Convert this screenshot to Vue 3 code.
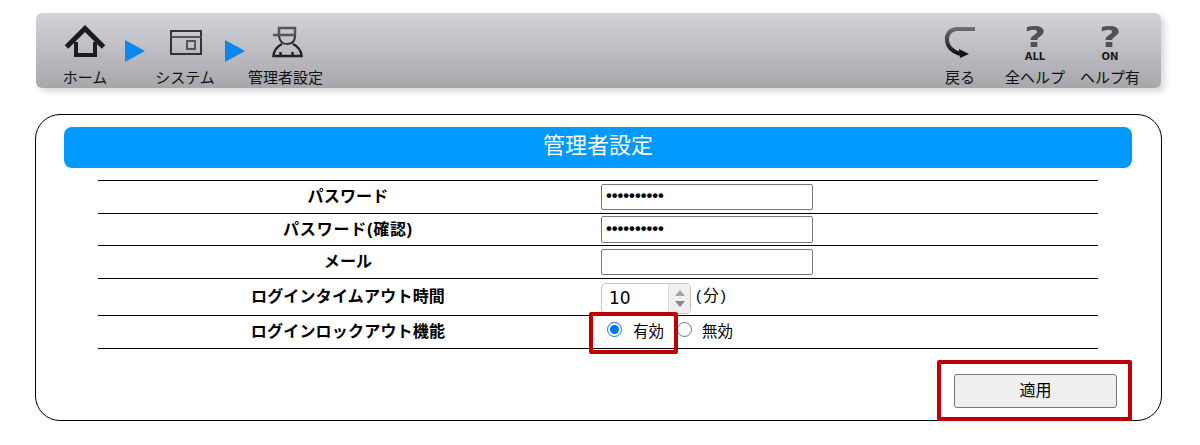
<template>
  <div class="page">
    <header class="toolbar">
      <nav class="crumbs">
        <a class="tool tool-home">
          <svg class="icon" width="46" height="40" viewBox="0 0 46 40">
            <path d="M4.500 27 L23 8.500 L41.500 27" fill="none" stroke="#1c1c1c" stroke-width="5" />
            <path d="M14 22 V35 H33 V22" fill="none" stroke="#1c1c1c" stroke-width="4" />
          </svg>
          <span>ホーム</span>
        </a>
        <i class="arrow"></i>
        <a class="tool tool-system">
          <svg class="icon" width="46" height="40" viewBox="0 0 46 40">
            <rect x="9" y="11" width="30" height="23" fill="none" stroke="#333" stroke-width="2" />
            <path d="M9 17 H39" stroke="#555" stroke-width="2" />
            <rect x="25" y="21" width="8" height="8" fill="none" stroke="#555" stroke-width="2" />
          </svg>
          <span>システム</span>
        </a>
        <i class="arrow"></i>
        <a class="tool tool-admin">
          <svg class="icon" width="46" height="40" viewBox="0 0 46 40">
            <path d="M16 15 V8 H32 V15 M10 15 H33" fill="none" stroke="#555" stroke-width="2.5" />
            <path d="M16 16 Q17 24 24 24 Q32 24 32 16" fill="none" stroke="#333" stroke-width="2" />
            <path d="M19 24 Q11 28 10.500 36 H38.500 Q38 28 30 24" fill="none" stroke="#222" stroke-width="2.5" />
            <path d="M17.500 32 V36 M29.500 32 V36" stroke="#222" stroke-width="2.5" />
          </svg>
          <span>管理者設定</span>
        </a>
      </nav>
      <nav class="actions">
        <a class="tool act-back">
          <svg class="icon" width="46" height="40" viewBox="0 0 46 40">
            <defs>
              <linearGradient id="backFade" gradientUnits="userSpaceOnUse" x1="0" y1="6" x2="0" y2="34">
                <stop offset="0" stop-color="#777" />
                <stop offset="1" stop-color="#111" />
              </linearGradient>
            </defs>
            <path d="M38 9 H19 Q9 11 10 21 Q11 30 23 34" fill="none" stroke="url(#backFade)" stroke-width="4" />
            <path d="M22 29 L32 34 L23 38 Z" fill="#111" />
          </svg>
          <span>戻る</span>
        </a>
        <a class="tool act-all">
          <div class="help">
            <b class="mark">?</b>
            <b class="sub">ALL</b>
          </div>
          <span>全ヘルプ</span>
        </a>
        <a class="tool act-on">
          <div class="help">
            <b class="mark">?</b>
            <b class="sub">ON</b>
          </div>
          <span>ヘルプ有</span>
        </a>
      </nav>
    </header>

    <section class="card">
      <h1 class="title">管理者設定</h1>
      <table class="form">
        <tbody>
          <tr class="r33">
            <th>パスワード</th>
            <td><input class="text pass" type="password" value="1234567890" /></td>
          </tr>
          <tr class="r32">
            <th>パスワード(確認)</th>
            <td><input class="text pass" type="password" value="1234567890" /></td>
          </tr>
          <tr class="r33">
            <th>メール</th>
            <td><input class="text" type="text" /></td>
          </tr>
          <tr class="r37">
            <th>ログインタイムアウト時間</th>
            <td>
              <div class="spin">
                <span class="spin-value">10</span>
                <span class="spin-btns">
                  <i class="up"></i>
                  <i class="down"></i>
                </span>
              </div>
              <span class="unit">(分)</span>
            </td>
          </tr>
          <tr class="r33">
            <th>ログインロックアウト機能</th>
            <td class="radios">
              <label class="radio first"><input type="radio" name="lock" checked /><span>有効</span></label>
              <label class="radio"><input type="radio" name="lock" /><span>無効</span></label>
            </td>
          </tr>
        </tbody>
      </table>
      <div class="foot">
        <button class="apply">適用</button>
      </div>
      <div class="mark-box box-radio"></div>
      <div class="mark-box box-apply"></div>
    </section>
  </div>
</template>

<script setup>
</script>

<style>
html,
body {
  margin: 0;
  background: #fff;
}
</style>

<style scoped>
.page {
  width: 1200px;
  height: 445px;
  overflow: hidden;
  padding-top: 13px;
  box-sizing: border-box;
  font-family: "Liberation Sans", "Noto Sans CJK JP", sans-serif;
  color: #000;
}
.toolbar {
  width: 1125px;
  height: 75px;
  margin-left: 36px;
  display: flex;
  justify-content: space-between;
  border-radius: 6px;
  background: linear-gradient(#d3d3d9, #a6a6ab);
  box-shadow: 4px 4px 6px rgba(0, 0, 0, 0.15);
}
.crumbs,
.actions {
  display: flex;
  position: relative;
}
.tool {
  display: flex;
  flex-direction: column;
  align-items: center;
  font-size: 15px;
  line-height: 18px;
  color: #111;
  white-space: nowrap;
}
.icon {
  display: block;
  height: 40px;
  margin-top: 7px;
  margin-bottom: 9px;
  filter: blur(0.4px);
}
.tool-home {
  width: 46px;
  margin-left: 26px;
}
.tool-system {
  width: 60px;
}
.tool-admin {
  width: 75px;
}
.arrow {
  width: 0;
  height: 0;
  margin: 27px 0 0 0;
  border-left: 20px solid #0d86ee;
  border-top: 11px solid transparent;
  border-bottom: 11px solid transparent;
}
.crumbs .arrow:nth-child(2) {
  margin-left: 17px;
  margin-right: 10px;
}
.crumbs .arrow:nth-child(4) {
  margin-left: 10px;
  margin-right: 3px;
}
.act-back {
  width: 46px;
  margin-right: 22px;
}
.act-all {
  width: 60px;
  margin-right: 15px;
}
.act-on {
  width: 60px;
  margin-right: 21px;
}
.help {
  height: 56px;
  display: flex;
  flex-direction: column;
  align-items: center;
  font-family: "DejaVu Sans", sans-serif;
}
.mark {
  font-size: 28px;
  line-height: 28px;
  margin-top: 11px;
  color: #525254;
  transform: scaleX(1.35);
  filter: blur(0.4px);
}
.sub {
  font-size: 10px;
  line-height: 10px;
  color: #1c1c1c;
}
.card {
  position: relative;
  box-sizing: border-box;
  width: 1127px;
  height: 307px;
  margin: 26px 0 0 35px;
  padding: 12px 29px 0 28px;
  border: 1px solid #000;
  border-radius: 25px;
}
.title {
  margin: 0;
  height: 41px;
  border-radius: 8px;
  background: #0099ff;
  color: #fff;
  font-size: 22px;
  font-weight: 400;
  line-height: 38px;
  text-align: center;
}
.form {
  width: 1000px;
  margin: 12px 0 0 34px;
  border-collapse: collapse;
  table-layout: fixed;
  border-top: 1px solid #000;
}
.form tr {
  border-bottom: 1px solid #000;
}
.r33 {
  height: 33px;
}
.r32 {
  height: 32px;
}
.r37 {
  height: 37px;
}
.form th {
  width: 500px;
  padding: 0;
  font-size: 16px;
  line-height: 20px;
  letter-spacing: 0.2px;
  font-weight: 700;
  text-align: center;
}
.form .r32 th {
  letter-spacing: 0.8px;
}
.form td {
  padding: 0 0 0 3px;
  font-size: 15.5px;
  vertical-align: middle;
}
.text {
  display: block;
  box-sizing: border-box;
  width: 212px;
  height: 26px;
  padding: 1px 4px;
  border: 1px solid #767676;
  border-radius: 2px;
  background: #fff;
  font-size: 13px;
  font-family: "Liberation Sans", sans-serif;
}
.pass {
  padding-bottom: 4px;
  font-size: 16.5px;
  font-weight: 700;
}
.r32 .text {
  height: 27px;
}
.form td:has(.spin) {
  display: flex;
  align-items: center;
  height: 36px;
  box-sizing: border-box;
}
.spin {
  box-sizing: border-box;
  width: 90px;
  height: 31px;
  margin-top: 2px;
  display: flex;
  justify-content: space-between;
  border: 1px solid #c4c4c4;
  border-radius: 5px;
  font-family: "DejaVu Sans", sans-serif;
  font-size: 17px;
  line-height: 29px;
  padding-left: 7px;
  overflow: hidden;
}
.spin-btns {
  width: 21px;
  background: #efefef;
  border-left: 1px solid #dcdcdc;
  display: flex;
  flex-direction: column;
  justify-content: center;
  align-items: center;
  gap: 5px;
}
.up,
.down {
  width: 0;
  height: 0;
  border-left: 5px solid transparent;
  border-right: 5px solid transparent;
}
.up {
  border-bottom: 6px solid #a3a3a3;
}
.down {
  border-top: 6px solid #8a8a8a;
}
.unit {
  margin-left: 5px;
  position: relative;
  top: -3px;
  letter-spacing: 2px;
}
.radios {
  padding-bottom: 4px !important;
}
.radio {
  display: inline-flex;
  align-items: center;
}
.radio input {
  width: 15px;
  height: 15px;
  margin: 0;
  accent-color: #0075ff;
}
.radio span {
  margin-left: 10px;
}
.radio.first {
  margin-left: 6px;
  margin-right: 13px;
}
.radio.first span {
  margin-left: 11px;
}
.foot {
  display: flex;
  justify-content: flex-end;
  margin-top: 25px;
  margin-right: 15px;
}
.apply {
  width: 163px;
  height: 34px;
  border: 1px solid #767676;
  border-radius: 3px;
  background: #efefef;
  padding: 0 0 4px;
  font-size: 16px;
  font-family: "Liberation Sans", "Noto Sans CJK JP", sans-serif;
  color: #000;
}
.mark-box {
  position: absolute;
  box-sizing: border-box;
  border-style: solid;
  border-color: #c00000;
  border-radius: 2px;
}
.box-radio {
  left: 553px;
  top: 197px;
  width: 89px;
  height: 42px;
  border-width: 4px;
}
.box-apply {
  left: 901px;
  top: 245px;
  width: 195px;
  height: 61px;
  border-width: 4px;
}
</style>
